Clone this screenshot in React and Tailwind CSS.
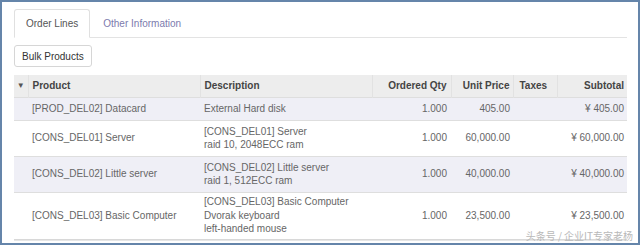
import React from 'react';

const rows = [
  { product: '[PROD_DEL02] Datacard', desc: ['External Hard disk'], qty: '1.000', price: '405.00', subtotal: '¥ 405.00', h: 'h-[23px]', shade: true },
  { product: '[CONS_DEL01] Server', desc: ['[CONS_DEL01] Server', 'raid 10, 2048ECC ram'], qty: '1.000', price: '60,000.00', subtotal: '¥ 60,000.00', h: 'h-[36px]', shade: false },
  { product: '[CONS_DEL02] Little server', desc: ['[CONS_DEL02] Little server', 'raid 1, 512ECC ram'], qty: '1.000', price: '40,000.00', subtotal: '¥ 40,000.00', h: 'h-[36px]', shade: true },
  { product: '[CONS_DEL03] Basic Computer', desc: ['[CONS_DEL03] Basic Computer', 'Dvorak keyboard', 'left-handed mouse'], qty: '1.000', price: '23,500.00', subtotal: '¥ 23,500.00', h: 'h-[47px]', shade: false },
];

export default function App() {
  return (
    <div
      className="relative w-[640px] h-[245px] overflow-hidden border-2 border-[#6585aa] bg-white pl-[12px] pr-[11px] pt-[7px] text-[10px] text-[#666]"
      style={{ fontFamily: '"Liberation Sans", Arial, sans-serif' }}
    >
      {/* Tabs */}
      <div className="flex h-[29px] border-b border-[#e3e3e3]">
        <div className="-mb-px flex items-center rounded-t-[3px] border border-[#e0e0e0] border-b-white bg-white px-[11px] text-[#555]">
          Order Lines
        </div>
        <div className="ml-[2px] flex items-center px-[11px] text-[#7c7bad]">Other Information</div>
      </div>

      {/* Button */}
      <div className="mt-[7px]">
        <button className="h-[22px] rounded-[3px] border border-[#d6d6d6] bg-white px-[7px] text-[#333]">
          Bulk Products
        </button>
      </div>

      {/* Table */}
      <table className="mt-[8px] w-[613px] table-fixed border-collapse leading-[13.5px]">
        <colgroup>
          <col className="w-[14px]" />
          <col className="w-[172px]" />
          <col className="w-[172px]" />
          <col className="w-[79px]" />
          <col className="w-[62px]" />
          <col className="w-[44px]" />
          <col className="w-[70px]" />
        </colgroup>
        <thead>
          <tr className="h-[22px] bg-[#ededed] font-bold text-[#444]">
            <th className="border-r border-[#e2e2e2] text-center text-[8px] font-normal text-[#555]">▼</th>
            <th className="border-r border-[#e2e2e2] pl-[4px] text-left">Product</th>
            <th className="border-r border-[#e2e2e2] pl-[4px] text-left">Description</th>
            <th className="border-r border-[#e2e2e2] pr-[4px] text-right">Ordered Qty</th>
            <th className="border-r border-[#e2e2e2] pr-[3px] text-right">Unit Price</th>
            <th className="border-r border-[#e2e2e2] pl-[6px] text-left">Taxes</th>
            <th className="pr-[3px] text-right">Subtotal</th>
          </tr>
        </thead>
        <tbody>
          {rows.map((r) => (
            <tr key={r.product} className={`${r.h} border-t border-[#dedede] ${r.shade ? 'bg-[#efeff6]' : 'bg-white'}`}>
              <td />
              <td className="pl-[4px]">{r.product}</td>
              <td className="pl-[4px]">
                {r.desc.map((d) => (
                  <div key={d}>{d}</div>
                ))}
              </td>
              <td className="pr-[4px] text-right">{r.qty}</td>
              <td className="pr-[3px] text-right">{r.price}</td>
              <td />
              <td className="pr-[3px] text-right">{r.subtotal}</td>
            </tr>
          ))}
          <tr className="h-[2px] border-t border-[#d8d8d8] bg-[#e6e6e6]">
            <td colSpan={7} />
          </tr>
        </tbody>
      </table>

      {/* Watermark */}
      <div
        className="absolute bottom-[0px] right-[5px] text-[10px] text-[#b9b9b9]"
        style={{ fontFamily: '"Noto Sans CJK SC", sans-serif' }}
      >
        头条号 / 企业IT专家老杨
      </div>
    </div>
  );
}
